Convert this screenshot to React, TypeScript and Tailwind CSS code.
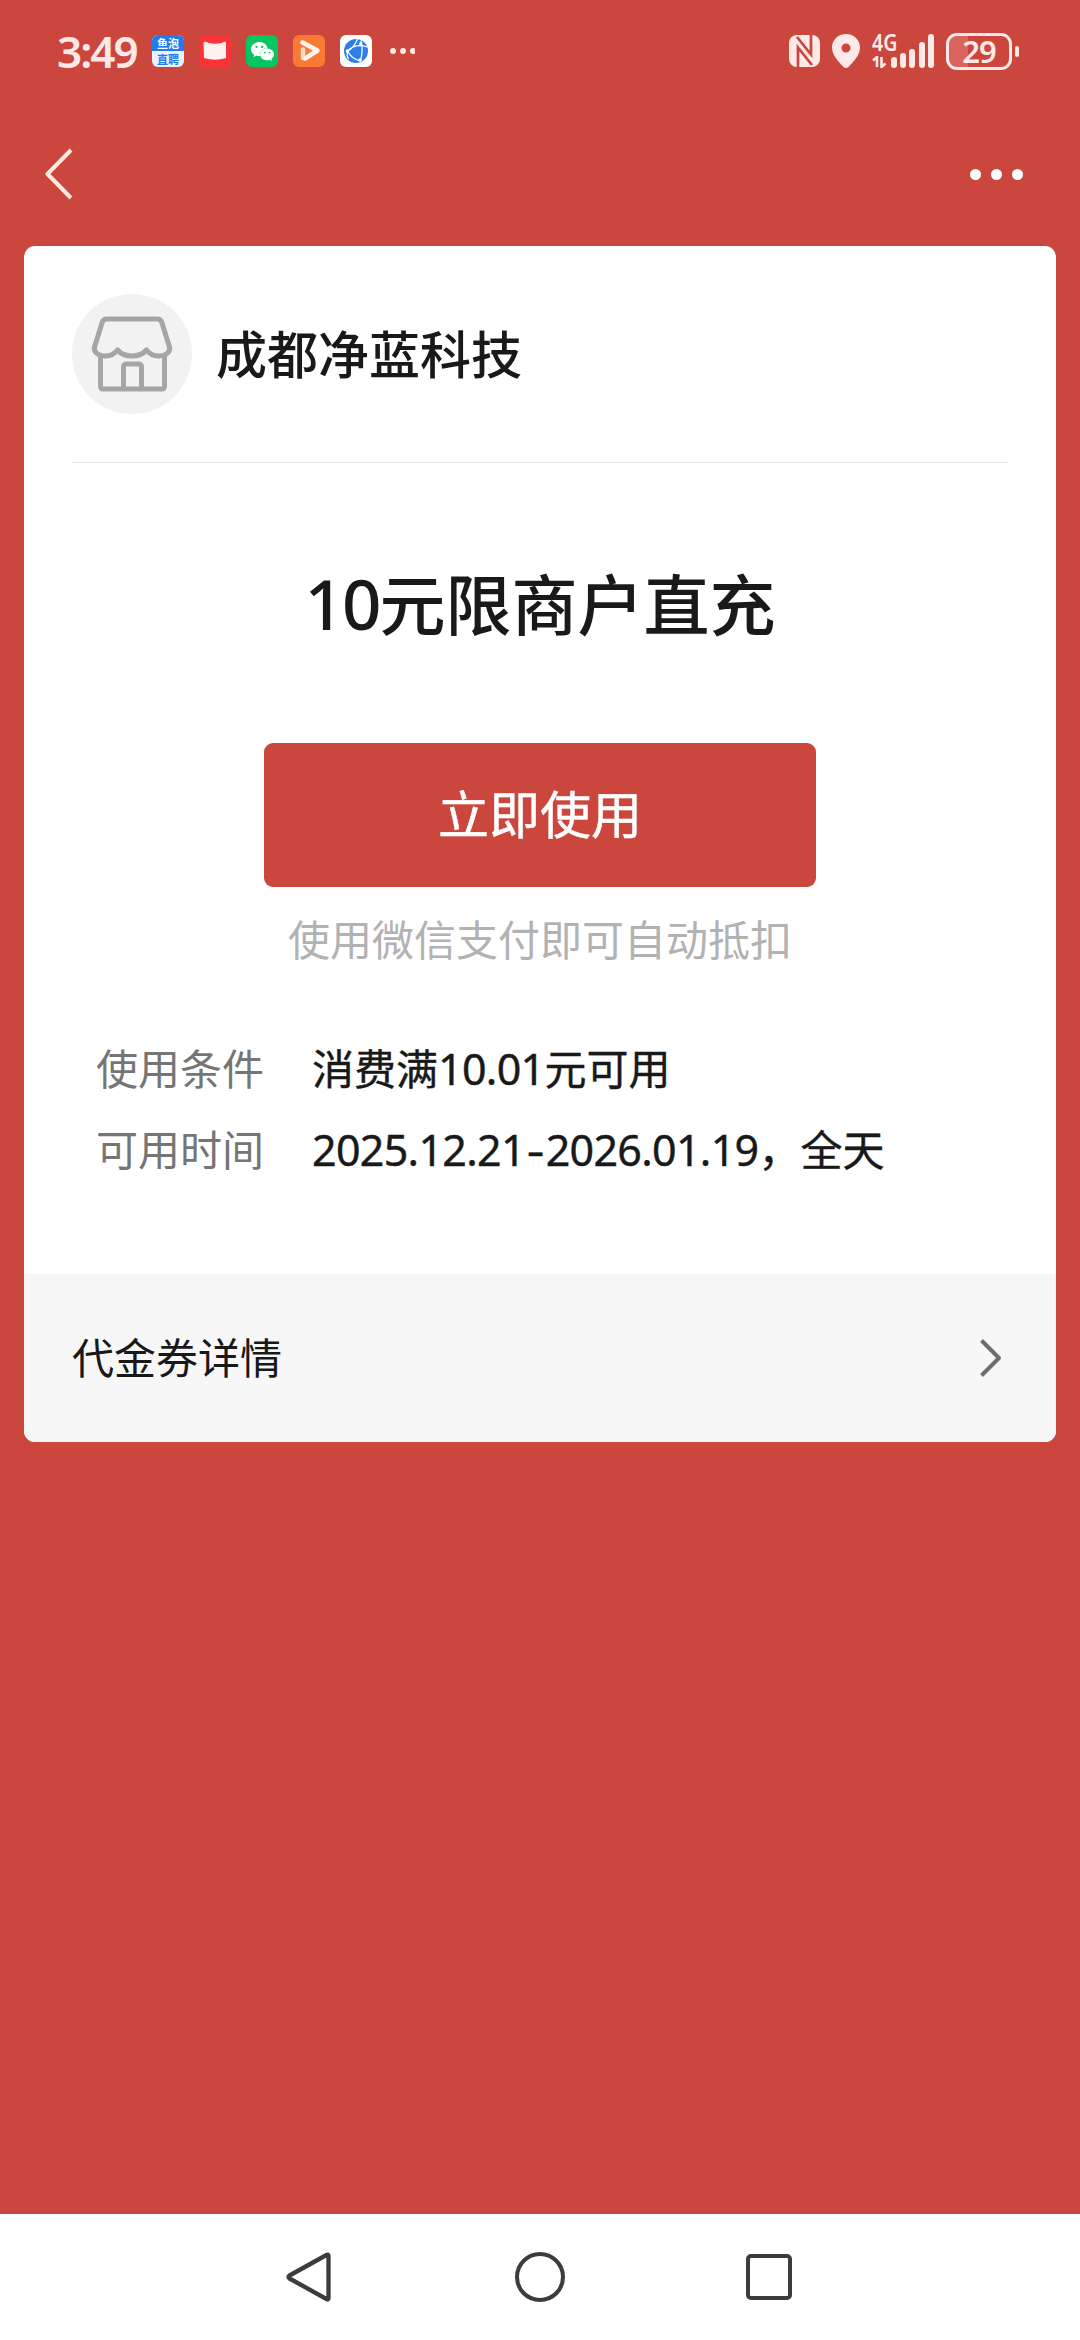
import React from "react";
import { SiWechat } from "react-icons/si";

interface CouponField {
  label: string;
  value: React.ReactNode;
}

function Num({ children }: { children: React.ReactNode }) {
  return (
    <span className="font-['Noto_Sans','Noto_Sans_CJK_SC',sans-serif] text-[43px] tracking-[-0.700px]">
      {children}
    </span>
  );
}

const fields: CouponField[] = [
  {
    label: "使用条件",
    value: (
      <>
        消费满<Num>10.01</Num>元可用
      </>
    ),
  },
  {
    label: "可用时间",
    value: (
      <>
        <Num>
          2025.12.21<span className="inline-block scale-x-75">–</span>2026.01.19
        </Num>
        ，全天
      </>
    ),
  },
];

function NotificationIcons() {
  return (
    <div className="ml-[12px] flex items-center gap-[15px]">
      <div className="flex h-8 w-8 flex-col overflow-hidden rounded-[6px] bg-[#e9f3ff] text-center text-[11px] font-bold leading-4">
        <span className="h-4 bg-[#1f7bf0] text-white">鱼泡</span>
        <span className="h-4 text-[#1f7bf0]">直聘</span>
      </div>
      <svg className="h-8 w-8" viewBox="0 0 32 32">
        <rect width="32" height="32" rx="6" fill="#fb3338" />
        <path
          d="M4.500 7.500l2-1 3 1.500q7 1.500 13 0l3-1.500 1.500 1v15.500q-11 3.500-22 0z"
          fill="#fff1ee"
        />
      </svg>
      <div className="flex h-8 w-8 items-center justify-center rounded-[6px] bg-[#07c65f]">
        <SiWechat className="h-[23px] w-[23px] text-white" />
      </div>
      <svg className="h-8 w-8" viewBox="0 0 32 32">
        <rect width="32" height="32" rx="6" fill="#fa7a35" />
        <g fill="none" strokeLinecap="round" strokeLinejoin="round" strokeWidth="4.500">
          <path d="M10 14.500v8.500" stroke="#ffd9bf" />
          <path d="M9.500 7.500L24.500 15.500 12 23.500" stroke="#fff6ef" />
        </g>
      </svg>
      <svg className="h-8 w-8" viewBox="0 0 32 32">
        <rect width="32" height="32" rx="6" fill="#fff" />
        <circle cx="16" cy="16" r="12" fill="#2f7de9" />
        <g fill="none" stroke="#fff" strokeWidth="1.200">
          <path d="M7.500 16Q14 13 17.500 4M7.500 16q8-8 20-4M7.500 16q4 8 13 10M21 5.500q2.500 9-.5 20.500M7.500 16q-1 5 1 8" />
        </g>
        <circle cx="7.500" cy="16" r="1.800" fill="#fff" />
        <circle cx="20.500" cy="8.500" r="1.500" fill="#fff" />
        <circle cx="20" cy="25" r="1.800" fill="#fff" />
      </svg>
      <svg className="h-8 w-[28px]" viewBox="0 0 28 32" fill="#fdeae8">
        <circle cx="6" cy="16" r="3" />
        <circle cx="16" cy="16" r="3" />
        <circle cx="26" cy="16" r="3" />
      </svg>
    </div>
  );
}

function SignalIcons() {
  return (
    <div className="flex items-center">
      <svg className="h-8 w-[31px]" viewBox="0 0 31 32">
        <rect width="31" height="32" rx="8" fill="#fdeae8" />
        <path
          d="M9 32V12.500L23 30M22 0v19.500L8 2"
          fill="none"
          stroke="#cb473d"
          strokeWidth="2.700"
        />
      </svg>
      <svg className="ml-[12px] h-[34px] w-7" viewBox="0 0 28 34">
        <path
          fillRule="evenodd"
          d="M14 0C6 0 0 6 0 13.500 0 21 6 27 11.500 33q2.500 2 5 0C22 27 28 21 28 13.500 28 6 22 0 14 0zm0 9.500a4.500 4.500 0 1 1 0 9 4.500 4.500 0 0 1 0-9z"
          fill="#fdeae8"
        />
      </svg>
      <div className="ml-[12px] flex h-[34px] items-end">
        <div className="flex h-[34px] w-[19px] flex-col justify-between">
          <span className="origin-left scale-x-85 font-['Noto_Sans',sans-serif] text-[23px] font-semibold leading-[17px]">
            4G
          </span>
          <svg className="h-[12px] w-4" viewBox="0 0 16 12">
            <path
              d="M1 4.500L5 1v10M9.500 1v10l4-3.500"
              fill="none"
              stroke="#fdeae8"
              strokeWidth="2.600"
            />
          </svg>
        </div>
        <div className="flex items-end gap-[3.300px]">
          <i className="h-[11px] w-[6px] rounded-full bg-[#fdeae8]" />
          <i className="h-[15px] w-[6px] rounded-full bg-[#fdeae8]" />
          <i className="h-[19px] w-[6px] rounded-full bg-[#fdeae8]" />
          <i className="h-[26px] w-[6px] rounded-full bg-[#fdeae8]" />
          <i className="h-[34px] w-[6px] rounded-full bg-[#fdeae8]" />
        </div>
      </div>
      <div className="ml-[12px] flex h-[37px] w-[66px] items-center justify-center rounded-[11px] border-[3px] border-[#fdeae8] bg-[linear-gradient(90deg,#d9655e_32%,#cb473d_32%)] font-['Noto_Sans',sans-serif] text-[31px] font-semibold leading-none tracking-[-1px]">
        29
      </div>
      <i className="ml-[3px] h-[11px] w-[4px] rounded-full bg-[#fdeae8]" />
    </div>
  );
}

function ShopIcon() {
  return (
    <svg
      className="h-[120px] w-[120px] rounded-full bg-[#f2f2f2]"
      viewBox="0 0 120 120"
      fill="none"
      stroke="#a5a5a5"
      strokeWidth="5"
      strokeLinejoin="round"
    >
      <path d="M35 25h50q4 0 5 4l7.500 24c2 9-15 13-23 3-7 8-22 8-29 0-8 10-25 6-23-3l7.500-24q1-4 5-4z" />
      <path d="M28.500 60v32q0 3 3 3h58q3 0 3-3V60" />
      <path d="M51.500 95V73q0-3 3-3h12q3 0 3 3v22" />
    </svg>
  );
}

export default function App() {
  return (
    <div className="flex h-[2340px] w-[1080px] flex-col bg-[#cb473d] font-['Noto_Sans_CJK_SC',sans-serif] text-[#191919]">
      <div className="flex h-[102px] items-center justify-between pl-[57px] pr-[61px] text-[#fdeae8]">
        <div className="flex items-center">
          <span className="w-[83px] whitespace-nowrap font-['Noto_Sans',sans-serif] text-[44px] font-semibold leading-none tracking-[-2px]">
            3:49
          </span>
          <NotificationIcons />
        </div>
        <SignalIcons />
      </div>

      <div className="flex h-[144px] items-center justify-between pl-[45px] pr-[57px]">
        <svg className="h-[52px] w-[28px]" viewBox="0 0 28 52" fill="none">
          <path d="M26 2L2.500 26 26 50" stroke="#ffeae2" strokeWidth="4" strokeLinejoin="round" />
        </svg>
        <div className="flex gap-[10px]">
          <i className="h-[11px] w-[11px] rounded-full bg-white" />
          <i className="h-[11px] w-[11px] rounded-full bg-white" />
          <i className="h-[11px] w-[11px] rounded-full bg-white" />
        </div>
      </div>

      <div className="mx-6 flex h-[1196px] flex-col overflow-hidden rounded-[11px] bg-white">
        <div className="mx-12 flex h-[217px] items-center border-b border-[#e5e5e5]">
          <ShopIcon />
          <h2 className="ml-6 pb-[5px] text-[51px] font-medium leading-[60px]">成都净蓝科技</h2>
        </div>

        <div className="flex flex-1 flex-col items-center">
          <h1 className="mt-[88px] h-[100px] whitespace-nowrap text-[66px] font-medium leading-[100px]">
            <span className="font-['Noto_Sans',sans-serif] text-[69px] tracking-[-2px]">10</span>
            元限商户直充
          </h1>
          <button className="mt-[92px] h-[144px] w-[552px] rounded-[9px] bg-[#cb473d] pb-[5px] text-[51px] leading-none text-white [-webkit-text-stroke:0.500px_white]">
            立即使用
          </button>
          <p className="mt-[21px] h-[60px] text-[42px] leading-[60px] text-[#b2b2b2]">
            使用微信支付即可自动抵扣
          </p>

          <div className="mt-[58px] w-full pl-[72px] text-[42px] leading-[81px]">
            {fields.map((field) => (
              <div key={field.label} className="flex h-[81px]">
                <span className="w-[216px] text-[#757575]">{field.label}</span>
                <span className="whitespace-nowrap [-webkit-text-stroke:0.400px_#191919]">
                  {field.value}
                </span>
              </div>
            ))}
          </div>
        </div>

        <div className="flex h-[168px] items-center justify-between bg-[#f7f7f7] pl-12 pr-[54px] text-[42px]">
          <span className="pb-[6px]">代金券详情</span>
          <svg className="h-[40px] w-[23px]" viewBox="0 0 23 40" fill="none">
            <path d="M2.500 2.500L20 20 2.500 37.500" stroke="#6e6e6e" strokeWidth="4" strokeLinejoin="round" />
          </svg>
        </div>
      </div>

      <div className="mt-auto flex h-[126px] items-center bg-white pl-[279px]">
        <svg className="h-[52px] w-[52px]" viewBox="0 0 52 52" fill="none">
          <path
            d="M47.500 4q2-1 2 1v42q0 2-2 1L10.500 27.500q-2-1.500 0-3z"
            stroke="#3c3c3c"
            strokeWidth="4.300"
            strokeLinejoin="round"
          />
        </svg>
        <i className="ml-[184px] h-[50px] w-[50px] rounded-full border-4 border-[#3c3c3c]" />
        <i className="ml-[181px] h-[46px] w-[46px] rounded-[5px] border-4 border-[#3c3c3c]" />
      </div>
    </div>
  );
}
